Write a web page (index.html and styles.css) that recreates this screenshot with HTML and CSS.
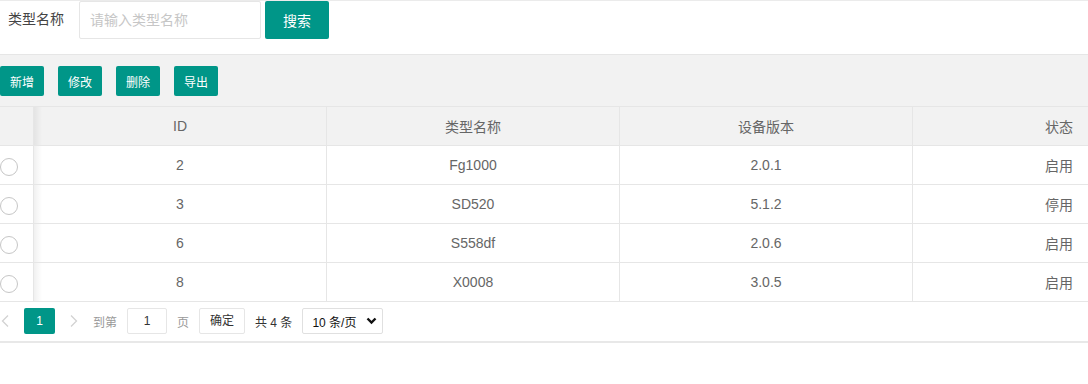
FILE: index.html
```html
<!DOCTYPE html>
<html lang="zh-CN">
<head>
<meta charset="utf-8">
<title>设备类型</title>
<link rel="stylesheet" href="styles.css">
</head>
<body>
<div class="search">
  <label class="search-label">类型名称</label>
  <div class="search-input">请输入类型名称</div>
  <button class="btn btn-search">搜索</button>
</div>
<div class="toolbar">
  <button class="btn btn-sm">新增</button>
  <button class="btn btn-sm">修改</button>
  <button class="btn btn-sm">删除</button>
  <button class="btn btn-sm">导出</button>
</div>
<div class="grid">
  <div class="row head">
    <div class="cell c0"></div>
    <div class="cell c1">ID</div>
    <div class="cell">类型名称</div>
    <div class="cell">设备版本</div>
    <div class="cell last">状态</div>
  </div>
  <div class="row">
    <div class="cell c0"><span class="radio"></span></div>
    <div class="cell c1">2</div>
    <div class="cell">Fg1000</div>
    <div class="cell">2.0.1</div>
    <div class="cell last">启用</div>
  </div>
  <div class="row">
    <div class="cell c0"><span class="radio"></span></div>
    <div class="cell c1">3</div>
    <div class="cell">SD520</div>
    <div class="cell">5.1.2</div>
    <div class="cell last">停用</div>
  </div>
  <div class="row">
    <div class="cell c0"><span class="radio"></span></div>
    <div class="cell c1">6</div>
    <div class="cell">S558df</div>
    <div class="cell">2.0.6</div>
    <div class="cell last">启用</div>
  </div>
  <div class="row">
    <div class="cell c0"><span class="radio"></span></div>
    <div class="cell c1">8</div>
    <div class="cell">X0008</div>
    <div class="cell">3.0.5</div>
    <div class="cell last">启用</div>
  </div>
</div>
<div class="pager">
  <span class="chev prev"><svg width="8" height="12" viewBox="0 0 8 12"><polyline points="7,0.5 1.5,6 7,11.5" fill="none" stroke="#d2d2d2" stroke-width="1.3"/></svg></span>
  <span class="page-cur">1</span>
  <span class="chev next"><svg width="8" height="12" viewBox="0 0 8 12"><polyline points="1,0.5 6.5,6 1,11.5" fill="none" stroke="#d2d2d2" stroke-width="1.3"/></svg></span>
  <span class="pg-text goto">到第</span>
  <span class="pg-input">1</span>
  <span class="pg-text page-word">页</span>
  <span class="pg-btn">确定</span>
  <span class="pg-count">共 4 条</span>
  <span class="pg-select">10 条/页<svg width="11" height="8" viewBox="0 0 11 8"><polyline points="1.5,1.5 5.5,5.5 9.5,1.5" fill="none" stroke="#111" stroke-width="2.4"/></svg></span>
</div>
</body>
</html>
```
FILE: styles.css
```css
* { box-sizing: border-box; }
html, body { margin: 0; padding: 0; background: #fff; }
body {
  width: 1088px;
  font-family: "Helvetica Neue", "Liberation Sans", Arial, "Noto Sans CJK SC", sans-serif;
  font-size: 14px;
  color: #666;
}
.search {
  display: flex;
  align-items: flex-start;
  height: 55px;
  border-top: 1px solid #ebebeb;
  border-bottom: 1px solid #e6e6e6;
}
.search-label {
  margin-left: 8px;
  width: 71px;
  line-height: 36px;
  font-size: 14px;
  color: #444;
}
.search-input {
  width: 182px;
  height: 38px;
  border: 1px solid #e6e6e6;
  border-radius: 2px;
  padding-left: 10px;
  line-height: 36px;
  color: #c6c6c6;
  font-size: 14px;
}
.btn {
  border: 0;
  border-radius: 2px;
  background: #009688;
  color: #fff;
  font-family: inherit;
  cursor: pointer;
  padding: 0;
}
.btn-search {
  margin-left: 4px;
  width: 64px;
  height: 38px;
  font-size: 14px;
}
.toolbar {
  display: flex;
  gap: 14px;
  height: 51px;
  padding-top: 11px;
  background: #f2f2f2;
}
.btn-sm {
  width: 44px;
  height: 30px;
  font-size: 12px;
}
.grid {
  border-top: 1px solid #e6e6e6;
}
.row {
  display: grid;
  grid-template-columns: 34px 293px 293px 293px 1fr;
  height: 39px;
  border-bottom: 1px solid #e6e6e6;
}
.row.head { background: #f2f2f2; }
.cell {
  display: flex;
  align-items: center;
  justify-content: center;
  border-right: 1px solid #e6e6e6;
  color: #666;
  font-size: 14px;
}
.cell.c0 { justify-content: flex-start; }
.cell.c1 {
  background-image: linear-gradient(to right, rgba(0,0,0,0.06), rgba(0,0,0,0) 8px);
}
.cell.last {
  border-right: 0;
  justify-content: flex-end;
  padding-right: 15px;
}
.radio {
  width: 18px;
  height: 18px;
  border: 1.5px solid #c6c6c6;
  border-radius: 50%;
  margin-top: 3px;
}
.pager {
  display: flex;
  align-items: center;
  height: 41px;
  padding-bottom: 1px;
  border-bottom: 2px solid #e8e8e8;
  font-size: 12px;
}
.chev { display: flex; align-items: center; width: 8px; height: 12px; }
.chev.prev { margin-left: 1px; }
.page-cur {
  margin-left: 15px;
  width: 31px;
  height: 26px;
  line-height: 26px;
  text-align: center;
  background: #009688;
  color: #fff;
  border-radius: 2px;
  font-size: 12px;
}
.chev.next { margin-left: 15px; }
.pg-text { color: #999; }
.goto { margin-left: 15px; }
.pg-input {
  margin-left: 10px;
  width: 40px;
  height: 26px;
  line-height: 24px;
  border: 1px solid #e6e6e6;
  border-radius: 2px;
  text-align: center;
  color: #333;
}
.page-word { margin-left: 10px; }
.pg-btn {
  margin-left: 10px;
  width: 46px;
  height: 26px;
  line-height: 24px;
  border: 1px solid #e6e6e6;
  border-radius: 2px;
  text-align: center;
  color: #333;
}
.pg-count { margin-left: 10px; color: #333; }
.pg-select {
  margin-left: 10px;
  width: 81px;
  height: 26px;
  border: 1px solid #e0e0e0;
  border-radius: 2px;
  display: flex;
  align-items: center;
  justify-content: space-between;
  padding: 0 5px 0 9px;
  color: #111;
  font-size: 12px;
}
```
